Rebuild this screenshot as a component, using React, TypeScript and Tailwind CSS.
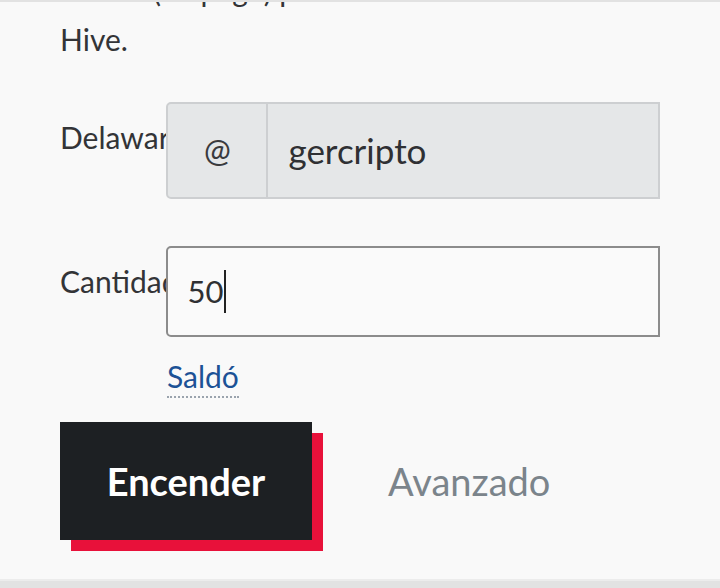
const App = () => {
  return (
    <div className="flex h-[588px] w-[720px] flex-col overflow-hidden border-t-2 border-[#e2e2e2] bg-[#f9f9f9] font-['Lato',sans-serif] text-[#333437]">
      <div className="px-[60px]">
        {/* tail of the previous line, cut off by the scroll */}
        <div className="flex h-[6px] items-end overflow-hidden">
          <p className="whitespace-nowrap pl-[93px] text-[30px] leading-[36px]">
            (de pago) para
          </p>
        </div>
        <p className="mt-[13px] text-[30px] leading-[36px]">Hive.</p>

        <div className="mt-[45px] flex items-start">
          <div className="w-[107px] overflow-hidden whitespace-nowrap pt-[17px] text-[30px] leading-[36px]">
            Delawarse
          </div>
          <div className="flex h-[97px] w-[496px] rounded-l-[5px] border-2 border-[#cdcfd1] bg-[#e5e7e8]">
            <span className="flex w-[100px] items-center justify-center border-r-2 border-[#cdcfd1] pb-[2px] text-[32px] text-[#3a3b3e]">
              @
            </span>
            <span className="flex items-center pl-[20px] text-[35px] text-[#2f3033]">
              gercripto
            </span>
          </div>
        </div>

        <div className="mt-[47px] flex items-start">
          <div className="w-[107px] overflow-hidden whitespace-nowrap pt-[17px] text-[30px] leading-[36px]">
            Cantidad
          </div>
          <div className="flex h-[91px] w-[496px] items-center rounded-l-[5px] border-2 border-[#8c8c8c] bg-[#fafafa] pl-[19px] text-[31px] text-[#2f3033]">
            50
            <span className="ml-[1px] inline-block h-[43px] w-[2px] bg-[#222]" />
          </div>
        </div>

        <div className="ml-[107px] mt-[21px]">
          <span className="inline-block border-b-2 border-dotted border-[#9aa3ad] pb-[2px] text-[30px] leading-[36px] text-[#1c5296]">
            Saldó
          </span>
        </div>

        <div className="mt-[24px] flex items-center">
          <button className="flex h-[118px] w-[252px] items-center justify-center bg-[#1d2023] text-[38px] font-bold text-white shadow-[11px_11px_0_#e8113a]">
            Encender
          </button>
          <span className="ml-[76px] text-[38px] text-[#7b848b]">Avanzado</span>
        </div>
      </div>
      <div className="mt-auto h-[9px] border-t-2 border-[#ececec] bg-[#e2e2e2]" />
    </div>
  );
};

export default App;
